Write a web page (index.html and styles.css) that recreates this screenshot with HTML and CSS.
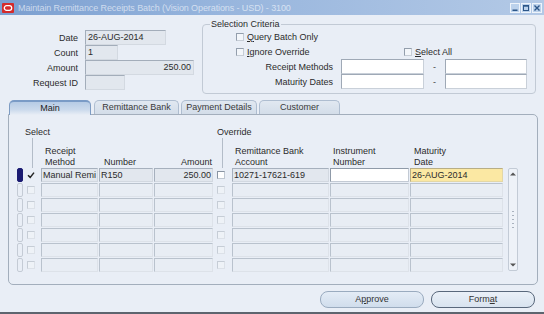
FILE: index.html
```html
<!DOCTYPE html>
<html>
<head>
<meta charset="utf-8">
<link rel="stylesheet" href="styles.css">
</head>
<body>
<div class="window">
  <div class="titlebar">
    <svg class="logo" width="12" height="10" viewBox="0 0 12 10"><rect width="12" height="10" rx="1" fill="#d42b2b"/><rect x="2.3" y="2.7" width="7.4" height="4.6" rx="2.3" fill="none" stroke="#fff" stroke-width="1.3"/></svg>
    <span class="title">Maintain Remittance Receipts Batch (Vision Operations - USD) - 3100</span>
    <div class="controls">
      <span class="ctl"><svg width="8" height="8" viewBox="0 0 8 8"><rect x="1.5" y="5.5" width="5" height="1.5" fill="#2c5688"/></svg></span>
      <span class="ctl"><svg width="8" height="8" viewBox="0 0 8 8"><rect x="1.5" y="1.5" width="5" height="5" fill="none" stroke="#2c5688" stroke-width="1"/><rect x="1.5" y="1.5" width="5" height="1.2" fill="#2c5688"/></svg></span>
      <span class="ctl"><svg width="8" height="8" viewBox="0 0 8 8"><path d="M1.5 1.5 L6.5 6.5 M6.5 1.5 L1.5 6.5" stroke="#2c5688" stroke-width="1.4"/></svg></span>
    </div>
  </div>

  <div class="top">
    <div class="batch">
      <div class="frow"><span class="lbl">Date</span><span class="fld ro w-date">26-AUG-2014</span></div>
      <div class="frow"><span class="lbl">Count</span><span class="fld ro w-count">1</span></div>
      <div class="frow"><span class="lbl">Amount</span><span class="fld ro num w-amount">250.00</span></div>
      <div class="frow"><span class="lbl">Request ID</span><span class="fld ro w-req"></span></div>
    </div>
    <fieldset class="criteria">
      <legend>Selection Criteria</legend>
      <div class="crow chk-row">
        <span class="citem"><span class="cb"></span><span><u>Q</u>uery Batch Only</span></span>
      </div>
      <div class="crow chk-row">
        <span class="citem"><span class="cb"></span><span><u>I</u>gnore Override</span></span>
        <span class="citem"><span class="cb"></span><span><u>S</u>elect All</span></span>
      </div>
      <div class="crow frange">
        <span class="clbl">Receipt Methods</span><span class="fld wh"></span><span class="dash">-</span><span class="fld wh"></span>
      </div>
      <div class="crow frange">
        <span class="clbl">Maturity Dates</span><span class="fld wh"></span><span class="dash">-</span><span class="fld wh"></span>
      </div>
    </fieldset>
  </div>

  <div class="tabs">
    <span class="tab active t-main">Main</span>
    <span class="tab t-bank">Remittance Bank</span>
    <span class="tab t-pay">Payment Details</span>
    <span class="tab t-cust">Customer</span>
  </div>

  <div class="panel">
    <div class="grid head">
      <span class="h-select">Select</span>
      <span class="h-override">Override</span>
      <span class="vline v-sel"></span>
      <span class="vline v-ovr"></span>
      <span class="h2 c-method">Receipt<br>Method</span>
      <span class="h2 c-number">Number</span>
      <span class="h2 c-amount">Amount</span>
      <span class="h2 c-remit">Remittance Bank<br>Account</span>
      <span class="h2 c-instr">Instrument<br>Number</span>
      <span class="h2 c-mat">Maturity<br>Date</span>
    </div>
    <div class="grid rows">
      <span class="ind cur"></span>
      <span class="selc"><svg width="8" height="8" viewBox="0 0 8 8"><path d="M1 4.2 L3.2 6.4 L7 1.6" fill="none" stroke="#222" stroke-width="1.5"/></svg></span>
      <span class="cell"><span class="rf ro">Manual Remi</span></span>
      <span class="cell"><span class="rf ro">R150</span></span>
      <span class="cell"><span class="rf ro num">250.00</span></span>
      <span class="ovc"><span class="cb en"></span></span>
      <span class="cell"><span class="rf ro">10271-17621-619</span></span>
      <span class="cell"><span class="rf wh"></span></span>
      <span class="cell"><span class="rf yel">26-AUG-2014</span></span>
      <span class="gap"></span>
      <span class="scroll">
        <svg class="arr" width="6" height="4" viewBox="0 0 6 4"><path d="M0 3.5 L3 0.5 L6 3.5 Z" fill="#555"/></svg>
        <span class="grip"><i></i><i></i><i></i><i></i><i></i></span>
        <svg class="arr" width="6" height="4" viewBox="0 0 6 4"><path d="M0 0.5 L3 3.5 L6 0.5 Z" fill="#555"/></svg>
      </span>

      <span class="ind"></span><span class="selc"><span class="cb dim"></span></span>
      <span class="cell"><span class="rf em"></span></span><span class="cell"><span class="rf em"></span></span><span class="cell"><span class="rf em"></span></span>
      <span class="ovc"><span class="cb dim"></span></span>
      <span class="cell"><span class="rf em"></span></span><span class="cell"><span class="rf em"></span></span><span class="cell"><span class="rf em"></span></span>
      <span class="gap"></span>

      <span class="ind"></span><span class="selc"><span class="cb dim"></span></span>
      <span class="cell"><span class="rf em"></span></span><span class="cell"><span class="rf em"></span></span><span class="cell"><span class="rf em"></span></span>
      <span class="ovc"><span class="cb dim"></span></span>
      <span class="cell"><span class="rf em"></span></span><span class="cell"><span class="rf em"></span></span><span class="cell"><span class="rf em"></span></span>
      <span class="gap"></span>

      <span class="ind"></span><span class="selc"><span class="cb dim"></span></span>
      <span class="cell"><span class="rf em"></span></span><span class="cell"><span class="rf em"></span></span><span class="cell"><span class="rf em"></span></span>
      <span class="ovc"><span class="cb dim"></span></span>
      <span class="cell"><span class="rf em"></span></span><span class="cell"><span class="rf em"></span></span><span class="cell"><span class="rf em"></span></span>
      <span class="gap"></span>

      <span class="ind"></span><span class="selc"><span class="cb dim"></span></span>
      <span class="cell"><span class="rf em"></span></span><span class="cell"><span class="rf em"></span></span><span class="cell"><span class="rf em"></span></span>
      <span class="ovc"><span class="cb dim"></span></span>
      <span class="cell"><span class="rf em"></span></span><span class="cell"><span class="rf em"></span></span><span class="cell"><span class="rf em"></span></span>
      <span class="gap"></span>

      <span class="ind"></span><span class="selc"><span class="cb dim"></span></span>
      <span class="cell"><span class="rf em"></span></span><span class="cell"><span class="rf em"></span></span><span class="cell"><span class="rf em"></span></span>
      <span class="ovc"><span class="cb dim"></span></span>
      <span class="cell"><span class="rf em"></span></span><span class="cell"><span class="rf em"></span></span><span class="cell"><span class="rf em"></span></span>
      <span class="gap"></span>

      <span class="ind"></span><span class="selc"><span class="cb dim"></span></span>
      <span class="cell"><span class="rf em"></span></span><span class="cell"><span class="rf em"></span></span><span class="cell"><span class="rf em"></span></span>
      <span class="ovc"><span class="cb dim"></span></span>
      <span class="cell"><span class="rf em"></span></span><span class="cell"><span class="rf em"></span></span><span class="cell"><span class="rf em"></span></span>
      <span class="gap"></span>
    </div>
  </div>

  <div class="actions">
    <span class="btn">A<u>p</u>prove</span>
    <span class="btn dflt">Form<u>a</u>t</span>
  </div>
</div>
</body>
</html>
```

FILE: styles.css
```css
* { box-sizing: border-box; }
html, body { margin: 0; padding: 0; }
body {
  width: 544px;
  height: 314px;
  overflow: hidden;
  background: #e9eef6;
  font-family: "Liberation Sans", Arial, sans-serif;
  font-size: 9px;
  color: #2b2b2b;
}
u { text-decoration: underline; text-underline-offset: 1px; }

.window {
  width: 544px;
  height: 314px;
  display: flex;
  flex-direction: column;
  background: #e9eef6;
  border-bottom: 2px solid #5d646e;
}

/* title bar */
.titlebar {
  height: 15px;
  flex: none;
  display: flex;
  align-items: center;
  padding-left: 2px;
  background: linear-gradient(to right, #7b9fd0 0%, #97b5dd 40%, #b3c9e6 100%);
}
.logo { display: block; flex: none; }
.title {
  margin-left: 4px;
  color: rgba(255, 255, 255, 0.6);
  font-size: 9px;
  letter-spacing: -0.1px;
  white-space: nowrap;
}
.controls { margin-left: auto; display: flex; gap: 1px; padding-right: 2px; }
.ctl {
  width: 10px;
  height: 10px;
  border: 1px solid #eef4fb;
  background: #bcd2ec;
  display: flex;
  align-items: center;
  justify-content: center;
}
.ctl svg { display: block; }

/* top section */
.top { height: 84px; flex: none; display: flex; }
.batch { width: 202px; padding-top: 15px; display: flex; flex-direction: column; }
.frow { height: 15px; display: flex; align-items: center; }
.lbl { width: 78px; text-align: right; margin-right: 7px; }

.fld {
  height: 15px;
  display: block;
  border: 1px solid;
  border-color: #a3adba #d3d9e1 #d3d9e1 #a3adba;
  padding: 0 2px;
  line-height: 13px;
  white-space: nowrap;
  overflow: hidden;
}
.ro { background: #e2e7ee; }
.wh { background: #ffffff; border-color: #9fa9b6 #c9d0d9 #c9d0d9 #9fa9b6; }
.num { text-align: right; }
.w-date { width: 81px; }
.w-count { width: 33px; }
.w-amount { width: 109px; }
.w-req { width: 40px; }

.criteria {
  margin: 4px 0 0 0;
  padding: 0 0 4px 0;
  width: 334px;
  height: 75px;
  border: 1px solid #c2cad5;
  border-radius: 4px;
}
.criteria legend {
  margin-left: 7px;
  padding: 0 1px;
  line-height: 10px;
  font-size: 9px;
  color: #2b2b2b;
}
.crow { height: 15px; }
.chk-row {
  display: grid;
  grid-template-columns: 168px auto;
  align-items: center;
  padding-left: 33px;
}
.citem { display: flex; align-items: center; white-space: nowrap; }
.cb {
  display: block;
  width: 8px;
  height: 8px;
  flex: none;
  border: 1px solid;
  border-color: #939eac #c6cdd6 #c6cdd6 #939eac;
  background: #f3f6fa;
  margin-right: 3px;
}
.frange {
  display: grid;
  grid-template-columns: 138px 83px 21px 82px;
  align-items: center;
}
.clbl { text-align: right; padding-right: 8px; white-space: nowrap; }
.dash { text-align: center; color: #444; }

/* tabs */
.tabs {
  height: 15px;
  flex: none;
  display: flex;
  align-items: flex-end;
  padding-left: 9px;
  position: relative;
  z-index: 1;
}
.tab {
  height: 14px;
  border: 1px solid #aebdd0;
  border-bottom: none;
  border-radius: 5px 5px 0 0;
  background: linear-gradient(#e1e8f1, #d3dde9);
  color: #3a3a3a;
  text-align: center;
  line-height: 13px;
  white-space: nowrap;
}
.tab.active {
  height: 15px;
  margin-bottom: -1px;
  border-color: #7e9cc3;
  border-top: 2px solid #7a9bc6;
  background: linear-gradient(#b6cbe5, #cbdaec 60%, #e9eef6);
  line-height: 12px;
  color: #222;
}
.t-main { width: 82px; }
.t-bank { width: 85px; margin-left: 3px; }
.t-pay { width: 76px; margin-left: 2px; }
.t-cust { width: 81px; margin-left: 2px; }

/* panel */
.panel {
  margin-left: 8px;
  width: 530px;
  height: 171px;
  flex: none;
  border: 1px solid #a3aebc;
  border-radius: 0 5px 5px 5px;
  padding: 12px 0 0 8px;
}
.grid {
  display: grid;
  grid-template-columns: 9px 15px 58px 55px 60px 18px 98px 80px 94px 4px 10px;
}
.head {
  grid-template-rows: 11px 8px 11px 11px;
  line-height: 11px;
}
.h-select { grid-column: 1 / span 5; grid-row: 1; padding-left: 8px; }
.h-override { grid-column: 6 / span 2; grid-row: 1; padding-left: 3px; white-space: nowrap; }
.vline { grid-row: 2 / span 3; width: 1px; background: #b3bcc8; }
.v-sel { grid-column: 2; margin-left: 6px; }
.v-ovr { grid-column: 6; margin-left: 8px; }
.h2 { grid-row: 3 / span 2; white-space: nowrap; align-self: end; }
.c-method { grid-column: 3; padding-left: 4px; }
.c-number { grid-column: 4; padding-left: 5px; }
.c-amount { grid-column: 5; text-align: right; padding-right: 2px; }
.c-remit { grid-column: 7; padding-left: 3px; }
.c-instr { grid-column: 8; padding-left: 3px; }
.c-mat { grid-column: 9; padding-left: 4px; }

.rows { grid-template-rows: repeat(7, 15px); }
.ind {
  width: 6px;
  height: 14px;
  border: 1px solid #c4cbd5;
  border-radius: 2px;
}
.ind.cur { background: #1b1b72; border-color: #1b1b72; }
.selc, .ovc { display: flex; align-items: center; height: 14px; }
.selc { padding-left: 1px; }
.ovc { padding-left: 3px; }
.cb.en { background: #fff; border-color: #8a95a3 #c0c8d2 #c0c8d2 #8a95a3; }
.cb.dim { background: #eef2f7; border-color: #c6cdd6 #dce1e8 #dce1e8 #c6cdd6; }
.cell { display: block; }
.rf {
  display: block;
  width: calc(100% - 1px);
  height: 14px;
  border: 1px solid;
  border-color: #a6b0bd #d2d8e0 #d2d8e0 #a6b0bd;
  padding: 0 1px;
  line-height: 12px;
  white-space: nowrap;
  overflow: hidden;
}
.rf.ro { background: #e2e7ee; }
.rf.wh { background: #fff; border-color: #8f9aa8 #c3cad4 #c3cad4 #8f9aa8; }
.rf.yel { background: #fbe8a3; border-color: #b8ae86 #e3d7a6 #e3d7a6 #b8ae86; }
.rf.em { background: #e8edf4; border-color: #b9c2cd #dde2e9 #dde2e9 #b9c2cd; }
.rf.num { text-align: right; }
.gap { display: block; }
.scroll {
  grid-column: 11;
  grid-row: 1 / span 7;
  height: 103px;
  border: 1px solid #c3cbd6;
  border-radius: 2px;
  background: #eef2f8;
  display: flex;
  flex-direction: column;
  align-items: center;
  justify-content: space-between;
  padding: 3px 0;
}
.arr { display: block; }
.grip { display: flex; flex-direction: column; gap: 3px; }
.grip i { display: block; width: 2px; height: 1px; background: #a9b2be; }

/* buttons */
.actions {
  flex: 1;
  display: flex;
  justify-content: flex-end;
  align-items: flex-start;
  padding: 6px 9px 0 0;
  gap: 7px;
}
.btn {
  width: 104px;
  height: 17px;
  border: 1px solid #9aabbf;
  border-radius: 8px;
  background: linear-gradient(#e4ecf6, #d0ddec);
  text-align: center;
  line-height: 15px;
  color: #333;
}
.btn.dflt { border-color: #59687c; background: linear-gradient(#eaf0f8, #d8e3ef); }
```
